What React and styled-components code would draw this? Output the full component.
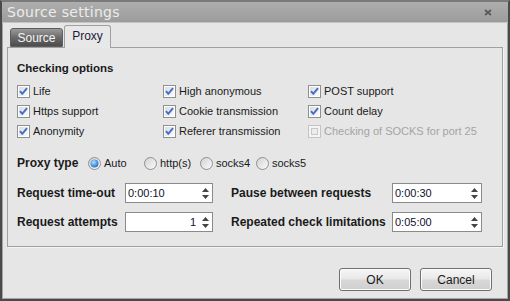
import styled, { createGlobalStyle } from "styled-components";

const Global = createGlobalStyle`
    html, body {
        margin: 0;
        padding: 0;
        background: #e6e6e6;
    }
`

const Window = styled.div`
    width: 510px;
    height: 301px;
    box-sizing: border-box;
    border: 2px solid #4a4a4a;
    border-top-color: #7a7a7a;
    box-shadow: inset 0 0 0 1px #a4a4a4;
    background: #e6e6e6;
    display: flex;
    flex-direction: column;
    font-family: "Liberation Sans", Arial, sans-serif;
    font-size: 11px;
    color: #1a1a1a;
`

const TitleBar = styled.div`
    height: 20px;
    background: linear-gradient(#aeaeae, #9c9c9c);
    border-bottom: 1px solid #c4c4c4;
    display: flex;
    align-items: center;
    justify-content: space-between;
    padding: 0 16px 0 5px;
    font-family: "DejaVu Sans", sans-serif;
    font-size: 14px;
    letter-spacing: 0.3px;
    color: #ececec;
`

const TabStrip = styled.div`
    display: flex;
    align-items: flex-end;
    gap: 1px;
    height: 24px;
    padding-left: 8px;
    position: relative;
    z-index: 1;
`

const Tab = styled.div`
    box-sizing: border-box;
    display: flex;
    align-items: center;
    justify-content: center;
    font-size: 12px;
    border-radius: 3px 3px 0 0;
    border: 1px solid ${p => (p.$active ? "#a0a0a0" : "#5e5e5e")};
    width: ${p => p.$w}px;
    height: ${p => (p.$active ? 23 : 19)}px;
    margin-bottom: ${p => (p.$active ? -1 : 0)}px;
    border-bottom: ${p => (p.$active ? "none" : "1px solid #5e5e5e")};
    background: ${p => (p.$active ? "#e8e8e8" : "linear-gradient(#9a9a9a, #6a6a6a 50%, #4c4c4c)")};
    color: ${p => (p.$active ? "#1c1c3c" : "#f4f4f4")};
    padding-bottom: ${p => (p.$active ? 3 : 0)}px;
`

const Panel = styled.div`
    margin: 0 5px;
    height: 200px;
    box-sizing: border-box;
    border: 1px solid #a0a0a0;
    box-shadow: 1px 1px 0 #f4f4f4;
    padding: 12px 0 0 9px;
`

const Heading = styled.div`
    font-weight: bold;
    font-size: 11.5px;
    height: 16px;
    line-height: 16px;
`

const CheckGrid = styled.div`
    display: grid;
    grid-template-columns: 146px 145px 1fr;
    grid-auto-rows: 20px;
    margin-top: 5px;
`

const Option = styled.label`
    display: flex;
    align-items: center;
    gap: 3px;
    color: ${p => (p.$disabled ? "#a4a4a4" : "#1a1a1a")};
    white-space: nowrap;
`

const TypeRow = styled.div`
    display: flex;
    align-items: center;
    height: 20px;
    margin-top: 12px;
`

const TypeLabel = styled.div`
    font-weight: bold;
    font-size: 12px;
    width: 71px;
`

const RadioOption = styled.label`
    display: flex;
    align-items: center;
    gap: 3px;
    width: 56px;
    white-space: nowrap;
`

const FieldGrid = styled.div`
    display: grid;
    grid-template-columns: 108px 88px 18px 161px 90px;
    grid-auto-rows: 20px;
    row-gap: 9px;
    margin-top: 10px;
    align-items: center;
`

const FieldLabel = styled.div`
    font-weight: bold;
    font-size: 12px;
    white-space: nowrap;
    grid-column: ${p => p.$col};
`

const SpinBox = styled.div`
    grid-column: ${p => p.$col};
    height: 20px;
    box-sizing: border-box;
    border: 1px solid #8a8a8a;
    background: #fff;
    display: flex;
    align-items: center;
`

const SpinText = styled.div`
    flex: 1;
    padding: 0 2px;
    text-align: ${p => (p.$right ? "right" : "left")};
    color: #10102a;
`

const SpinArrows = styled.div`
    width: 14px;
    height: 100%;
    display: flex;
    flex-direction: column;
    justify-content: space-between;
    align-items: center;
    padding: 4px 0 3px;
    box-sizing: border-box;
`

const Footer = styled.div`
    display: flex;
    justify-content: flex-end;
    gap: 9px;
    padding: 21px 16px 0 0;
`

const Button = styled.button`
    width: 72px;
    height: 23px;
    box-sizing: border-box;
    border: 1px solid #707070;
    border-radius: 3px;
    background: linear-gradient(#f6f6f6, #e8e8e8 48%, #d8d8d8 52%, #cfcfcf);
    box-shadow: inset 0 0 0 1px #fbfbfb;
    font-family: "Liberation Sans", Arial, sans-serif;
    font-size: 12px;
    color: #1a1a1a;
    padding: 0;
`

function CloseIcon() {
    return (
        <svg width="8" height="7" viewBox="0 0 8 7">
            <path d="M1 1 L7 6 M7 1 L1 6" stroke="#5a5a5a" strokeWidth="1.8" />
        </svg>
    )
}

function CheckBox({ checked, disabled }) {
    if (disabled) {
        return (
            <svg width="13" height="13" viewBox="0 0 13 13">
                <rect x="0.5" y="0.5" width="12" height="12" fill="#f4f4f4" stroke="#c4c4c4" />
                <rect x="3.5" y="3.5" width="6" height="6" fill="#ececec" stroke="#c8c8c8" />
            </svg>
        )
    }
    return (
        <svg width="13" height="13" viewBox="0 0 13 13">
            <defs>
                <linearGradient id="cbg" x1="0" y1="0" x2="1" y2="1">
                    <stop offset="0" stopColor="#dcdcdc" />
                    <stop offset="1" stopColor="#fbfbfb" />
                </linearGradient>
            </defs>
            <rect x="0.5" y="0.5" width="12" height="12" fill="#fff" stroke="#8e8f8f" />
            <rect x="2" y="2" width="9" height="9" fill="url(#cbg)" />
            {checked && (
                <path d="M3 6.2 L5.3 8.8 L10 3.2" fill="none" stroke="#4070c8" strokeWidth="2" />
            )}
        </svg>
    )
}

function Radio({ checked }) {
    return (
        <svg width="13" height="13" viewBox="0 0 13 13">
            <defs>
                <linearGradient id="rbg" x1="0" y1="0" x2="1" y2="1">
                    <stop offset="0" stopColor="#d0d0d0" />
                    <stop offset="1" stopColor="#fdfdfd" />
                </linearGradient>
                <radialGradient id="rdot" cx="0.4" cy="0.35" r="0.7">
                    <stop offset="0" stopColor="#b8e2ff" />
                    <stop offset="0.6" stopColor="#4a9ae2" />
                    <stop offset="1" stopColor="#2a6cc0" />
                </radialGradient>
            </defs>
            <circle cx="6.5" cy="6.5" r="6" fill="url(#rbg)" stroke="#8e8f8f" />
            {checked && <circle cx="6.5" cy="6.5" r="4" fill="url(#rdot)" />}
        </svg>
    )
}

function Arrows() {
    return (
        <SpinArrows>
            <svg width="7" height="4" viewBox="0 0 7 4"><path d="M0 4 L3.5 0 L7 4 Z" fill="#444" /></svg>
            <svg width="7" height="4" viewBox="0 0 7 4"><path d="M0 0 L7 0 L3.5 4 Z" fill="#444" /></svg>
        </SpinArrows>
    )
}

const checks = [
    { label: "Life", checked: true },
    { label: "High anonymous", checked: true },
    { label: "POST support", checked: true },
    { label: "Https support", checked: true },
    { label: "Cookie transmission", checked: true },
    { label: "Count delay", checked: true },
    { label: "Anonymity", checked: true },
    { label: "Referer transmission", checked: true },
    { label: "Checking of SOCKS for port 25", disabled: true },
]

const types = ["Auto", "http(s)", "socks4", "socks5"]

export default function App() {
    return (
        <>
            <Global />
            <Window>
                <TitleBar>
                    <span>Source settings</span>
                    <CloseIcon />
                </TitleBar>
                <TabStrip>
                    <Tab $w={53}>Source</Tab>
                    <Tab $w={47} $active>Proxy</Tab>
                </TabStrip>
                <Panel>
                    <Heading>Checking options</Heading>
                    <CheckGrid>
                        {checks.map(c => (
                            <Option key={c.label} $disabled={c.disabled}>
                                <CheckBox checked={c.checked} disabled={c.disabled} />
                                {c.label}
                            </Option>
                        ))}
                    </CheckGrid>
                    <TypeRow>
                        <TypeLabel>Proxy type</TypeLabel>
                        {types.map((t, i) => (
                            <RadioOption key={t}>
                                <Radio checked={i === 0} />
                                {t}
                            </RadioOption>
                        ))}
                    </TypeRow>
                    <FieldGrid>
                        <FieldLabel $col={1}>Request time-out</FieldLabel>
                        <SpinBox $col={2}><SpinText>0:00:10</SpinText><Arrows /></SpinBox>
                        <FieldLabel $col={4}>Pause between requests</FieldLabel>
                        <SpinBox $col={5}><SpinText>0:00:30</SpinText><Arrows /></SpinBox>
                        <FieldLabel $col={1}>Request attempts</FieldLabel>
                        <SpinBox $col={2}><SpinText $right>1</SpinText><Arrows /></SpinBox>
                        <FieldLabel $col={4}>Repeated check limitations</FieldLabel>
                        <SpinBox $col={5}><SpinText>0:05:00</SpinText><Arrows /></SpinBox>
                    </FieldGrid>
                </Panel>
                <Footer>
                    <Button>OK</Button>
                    <Button>Cancel</Button>
                </Footer>
            </Window>
        </>
    )
}
